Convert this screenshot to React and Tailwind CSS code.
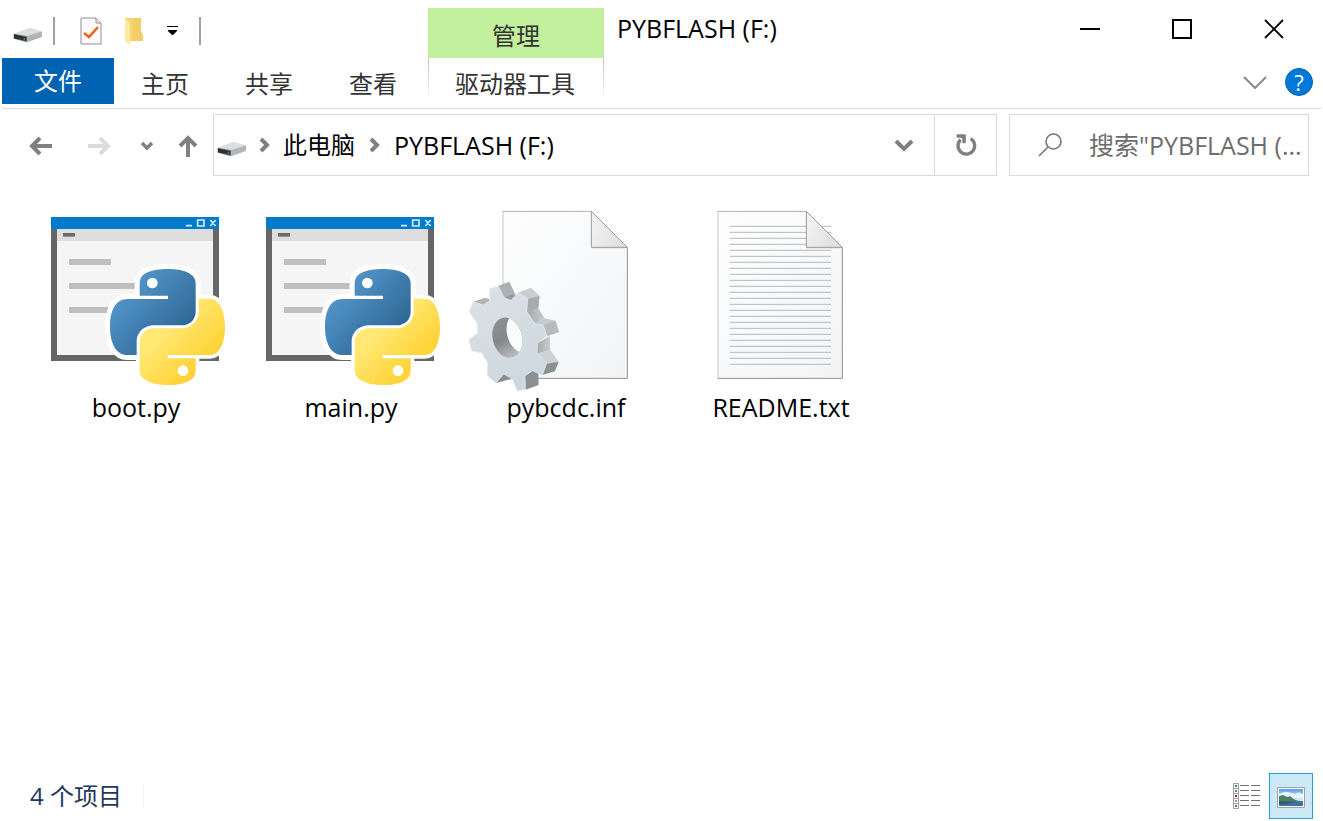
import { useState } from "react";

const tabs = ["主页", "共享", "查看"];

const files = [
  { name: "boot.py", Icon: PythonIcon },
  { name: "main.py", Icon: PythonIcon },
  { name: "pybcdc.inf", Icon: InfIcon },
  { name: "README.txt", Icon: TextIcon },
];

function DriveIcon() {
  return (
    <svg viewBox="0 0 90 48" className="mt-2 h-4 w-[30px] shrink-0">
      <path d="M2 20 50 2 87 13 42 27Z" fill="#dcdee1" />
      <path d="M42 27 87 13V30L42 46Z" fill="#b2b4b7" />
      <path d="M2 20 42 27V46L2 35Z" fill="#77797b" />
      <path d="M3 22 40 31V42L3 34Z" fill="#2d2f31" />
      <path d="M32 34h4v4h-4z" fill="#35c435" />
    </svg>
  );
}

function Crumb() {
  return (
    <svg viewBox="0 0 12 16" className="h-4 w-3 shrink-0" fill="none" stroke="#808080" strokeWidth="4">
      <path d="M2 2 8 8 2 14" />
    </svg>
  );
}

function PythonIcon() {
  const blue =
    "M413 207C366 207 329 218 329 250V287H414V297H292C258 297 240 330 240 380C240 432 260 465 292 465H320V424C320 395 345 376 372 376H455C480 376 497 358 497 335V250C497 220 460 207 413 207Z";
  const yellow =
    "M413 555C460 555 497 543 497 512V475H413V465H540C567 465 585 432 585 381C585 330 567 296 540 296H506V335C506 365 480 385 455 385H372C348 385 329 403 329 428V512C329 540 370 555 413 555Z";
  return (
    <svg viewBox="30 0 576 576" className="size-48">
      <defs>
        <linearGradient id="pyBlue" x1="0" y1="0" x2="0.8" y2="0.75">
          <stop offset="0.1" stopColor="#5a9fd4" />
          <stop offset="1" stopColor="#306998" />
        </linearGradient>
        <linearGradient id="pyYellow" x1="0.2" y1="0.3" x2="0.65" y2="0.75">
          <stop offset="0.2" stopColor="#ffe873" />
          <stop offset="1" stopColor="#ffd43b" />
        </linearGradient>
      </defs>
      <path d="M63 51H567V483H63Z" fill="#666" />
      <path d="M81 87H549V465H81Z" fill="#f5f5f5" />
      <path d="M81 87H549V123H81Z" fill="#dedede" />
      <path d="M63 51H567V87H63Z" fill="#007acc" />
      <path d="M99 99H135V110H99Z" fill="#6b6b6b" />
      <path d="M117 177H243V195H117ZM117 249H330V267H117ZM117 321H260V339H117Z" fill="#bfbfbf" />
      <path d="M468 77H486M503 60H522V78H503ZM541 60 557 78M557 60 541 78" fill="none" stroke="#d6ecfa" strokeWidth="5" />
      <path d={blue} fill="#fff" stroke="#fff" strokeWidth="30" strokeLinejoin="round" />
      <path d={yellow} fill="#fff" stroke="#fff" strokeWidth="22" strokeLinejoin="round" />
      <path d={blue} fill="url(#pyBlue)" />
      <path d={yellow} fill="url(#pyYellow)" />
      <circle cx="367" cy="249" r="16" fill="#fff" />
      <circle cx="459" cy="512" r="16" fill="#fff" />
    </svg>
  );
}

// blank page with a folded corner, x is the left edge
function Page({ x }) {
  return (
    <g transform={`translate(${x} 0)`}>
      <path d="M2 34H268L374 141V535H2Z" fill="url(#pageFill)" />
      <path d="M1 34V535" stroke="#d4d4d4" strokeWidth="4" />
      <path d="M0 34H268" stroke="#b0b0b0" strokeWidth="3" />
      <path d="M0 535H374V141" fill="none" stroke="#8c8c8c" strokeWidth="3" />
    </g>
  );
}

function Fold({ x }) {
  return (
    <g transform={`translate(${x} 0)`}>
      <path d="M266 34 374 141V146H266Z" fill="#e6e6e6" />
      <path d="M266 34 374 142H266Z" fill="url(#foldFill)" stroke="#9b9b9b" strokeWidth="3" />
    </g>
  );
}

function PageDefs() {
  return (
    <defs>
      <linearGradient id="pageFill" x1="0" y1="0" x2="1" y2="1">
        <stop offset="0" stopColor="#fefefe" />
        <stop offset="0.4" stopColor="#f9fafb" />
        <stop offset="1" stopColor="#f3f4f6" />
      </linearGradient>
      <linearGradient id="foldFill" x1="0" y1="0.6" x2="0.8" y2="1">
        <stop offset="0" stopColor="#f0f0f0" />
        <stop offset="1" stopColor="#dfdfdf" />
      </linearGradient>
    </defs>
  );
}

function InfIcon() {
  return (
    <svg viewBox="45 0 576 576" className="size-48 overflow-visible">
      <PageDefs />
      <defs>
        <linearGradient id="gearFace" x1="0" y1="0" x2="0.4" y2="1">
          <stop offset="0" stopColor="#dbe1e6" />
          <stop offset="1" stopColor="#cfd8e0" />
        </linearGradient>
        <linearGradient id="gearHole" x1="0" y1="0" x2="0.5" y2="1">
          <stop offset="0.2" stopColor="#8b8f91" />
          <stop offset="0.6" stopColor="#858889" />
          <stop offset="1" stopColor="#b9bdbf" />
        </linearGradient>
        <linearGradient id="gearSide" x1="0" y1="0" x2="1" y2="0">
          <stop offset="0" stopColor="#a4a9ac" />
          <stop offset="1" stopColor="#c9ced1" />
        </linearGradient>
        <clipPath id="gearClip">
          <ellipse cx="157" cy="413" rx="44" ry="61" transform="rotate(-14 157 413)" />
        </clipPath>
      </defs>
      <Page x={143} />
      <Fold x={143} />
      <path d="M55 305 90 293 104 297 103 310 85 316Z" fill="#aeb4b8" />
      <path d="M130 257 163 245 182 285 168 303 146 297Z" fill="#abb0b3" />
      <path d="M168 284 186 287 168 303 146 295Z" fill="#969b9e" />
      <path d="M189 278 228 263 254 287 217 298Z" fill="#c9ced2" />
      <path d="M217 297 254 287 250 326 216 337Z" fill="#a7acaf" />
      <path d="M216 335 250 325 269 355 240 372Z" fill="url(#gearSide)" />
      <path d="M238 371 269 355 302 362 265 377Z" fill="#c5cbcf" />
      <path d="M264 376 302 362 312 397 276 409Z" fill="#b5babd" />
      <path d="M247 430 284 408 286 451 246 461Z" fill="url(#gearSide)" />
      <path d="M246 460 286 450 311 485 275 493Z" fill="#ccd2d6" />
      <path d="M275 491 311 485 300 514 262 525Z" fill="#8b9092" />
      <path d="M210 528 232 512 250 516 251 555 211 569Z" fill="#8b9092" />
      <path d="M123 549 146 522 173 536Z" fill="#888d90" />
      <path
        d="M103 267 130 258 148 293 168 301 190 278 218 296 215 335 240 372 264 375 276 407 248 429 246 460 275 489 262 525 232 512 210 527 211 568 187 573 172 537 146 522 123 549 97 527 98 488 80 458 50 453 42 418 68 400 67 370 42 335 55 305 84 315 105 302Z"
        fill="url(#gearFace)"
        stroke="#e3e8ec"
        strokeWidth="2"
        strokeLinejoin="round"
      />
      <g clipPath="url(#gearClip)">
        <path d="M100 340H220V480H100Z" fill="url(#gearHole)" />
        <ellipse cx="197" cy="398" rx="41" ry="61" transform="rotate(-14 197 398)" fill="#fafbfb" />
      </g>
    </svg>
  );
}

function TextIcon() {
  return (
    <svg viewBox="-30 0 576 576" className="size-48">
      <PageDefs />
      <Page x={68} />
      {Array.from({ length: 24 }, (_, i) => (
        <path key={i} d={`M104 ${79 + i * 18}H408`} stroke="#b9b9b9" strokeWidth="3" />
      ))}
      <Fold x={68} />
    </svg>
  );
}

function TitleBar() {
  return (
    <header className="flex h-[58px]">
      <div className="flex w-[426px] items-center gap-[10px] pl-[11px] pt-1">
        <DriveIcon />
        <span className="h-7 w-[2px] bg-[#a0a0a0]" />
        <button type="button" aria-label="属性" className="ml-[15px]">
          <svg viewBox="0 0 22 28" className="h-7 w-[22px]">
            <path d="M1 1H16L21 6V27H1Z" fill="#fafafa" stroke="#8f8f8f" />
            <path d="M16 1V6H21" fill="#e8e8e8" stroke="#8f8f8f" />
            <path d="M4 16 9 20 18 10" fill="none" stroke="#f2601a" strokeWidth="2.5" />
          </svg>
        </button>
        <button type="button" aria-label="新建文件夹" className="ml-3">
          <svg viewBox="0 0 20 28" className="h-7 w-5">
            <path d="M1 1H17V15L19 18V24H1Z" fill="#f6d36b" />
            <path d="M9 1H17V15L19 18V24H9Z" fill="#f3ce68" />
            <path d="M1 1 6 6V28L1 24Z" fill="#ffe9a2" />
          </svg>
        </button>
        <button type="button" aria-label="自定义快速访问工具栏" className="ml-3">
          <svg viewBox="0 0 12 12" className="size-3">
            <path d="M1 1H12V2H1ZM2 5H11V6L7 10H6L2 6Z" fill="#000" />
          </svg>
        </button>
        <span className="ml-[11px] h-7 w-[2px] bg-[#a0a0a0]" />
      </div>
      <button type="button" className="mt-2 w-44 bg-[#c2f09c] pt-[5px] text-[#333]">管理</button>
      <h1 className="flex-1 pl-[13px] pt-3 text-[25px]/8">PYBFLASH (F:)</h1>
      <div className="flex pr-px">
        <button type="button" aria-label="最小化" className="flex w-[92px] items-center justify-center">
          <svg viewBox="0 0 20 20" className="size-5" stroke="#000" strokeWidth="2">
            <path d="M0 10H20" />
          </svg>
        </button>
        <button type="button" aria-label="最大化" className="flex w-[92px] items-center justify-center">
          <svg viewBox="0 0 20 20" className="size-5" fill="none" stroke="#000" strokeWidth="2">
            <path d="M1 1H19V19H1Z" />
          </svg>
        </button>
        <button type="button" aria-label="关闭" className="flex w-[92px] items-center justify-center">
          <svg viewBox="0 0 20 20" className="size-5" stroke="#000" strokeWidth="1.8">
            <path d="M1 1 19 19M19 1 1 19" />
          </svg>
        </button>
      </div>
    </header>
  );
}

function Ribbon() {
  return (
    <nav className="flex h-[51px] border-b border-[#dadbdc] text-[#333]">
      <button type="button" className="h-[46px] w-28 bg-[#0063b1] text-white">文件</button>
      {tabs.map((tab) => (
        <button key={tab} type="button" className="h-[50px] w-[104px] pr-[2px] pt-px">{tab}</button>
      ))}
      <div className="flex h-[50px] w-[178px] pl-[2px]">
        <span className="h-[38px] w-px bg-linear-to-b from-[#c0c0c0] to-[#f4f4f4]" />
        <button type="button" className="flex-1 pr-[2px] pt-px">驱动器工具</button>
        <span className="h-[38px] w-px bg-linear-to-b from-[#c0c0c0] to-[#f4f4f4]" />
      </div>
      <div className="ml-auto flex h-12 items-center gap-[18px] pr-2">
        <button type="button" aria-label="展开功能区">
          <svg viewBox="0 0 24 14" className="h-[14px] w-6" fill="none" stroke="#8a8a8a" strokeWidth="2">
            <path d="M1 2 12 13 23 2" />
          </svg>
        </button>
        <button type="button" aria-label="帮助" className="size-7 rounded-full border border-[#0063b1] bg-[#0078d7] text-[22px]/6 font-medium text-white">?</button>
      </div>
    </nav>
  );
}

function AddressBar() {
  const [query, setQuery] = useState("");

  return (
    <div className="flex h-[67px] items-start pr-3 pt-[5px]">
      <div className="flex h-16 w-[211px] items-center pl-[27px]">
        <button type="button" aria-label="后退" className="w-[58px]">
          <svg viewBox="0 0 24 20" className="h-5 w-6" fill="none" stroke="#808080" strokeWidth="4">
            <path d="M23 10H4M11 2 3 10 11 18" />
          </svg>
        </button>
        <button type="button" aria-label="前进" className="w-[52px]">
          <svg viewBox="0 0 24 20" className="h-5 w-6" fill="none" stroke="#dcdcdc" strokeWidth="4">
            <path d="M1 10H20M13 2 21 10 13 18" />
          </svg>
        </button>
        <button type="button" aria-label="最近位置" className="w-[39px]">
          <svg viewBox="0 0 16 10" className="h-[10px] w-4" fill="none" stroke="#808080" strokeWidth="3.5">
            <path d="M3 2 8 7 13 2" />
          </svg>
        </button>
        <button type="button" aria-label="上移">
          <svg viewBox="0 0 20 24" className="h-6 w-5" fill="none" stroke="#808080" strokeWidth="4">
            <path d="M10 23V4M2 12 10 4 18 12" />
          </svg>
        </button>
      </div>
      <div className="flex h-[62px] min-w-0 flex-1 items-center border border-[#d9d9d9] pl-[3px]">
        <DriveIcon />
        <span className="mx-3"><Crumb /></span>
        <button type="button">此电脑</button>
        <span className="ml-[14px] mr-[13px]"><Crumb /></span>
        <button type="button" className="text-[25px]/8">PYBFLASH (F:)</button>
        <button type="button" aria-label="历史记录" className="ml-auto px-5">
          <svg viewBox="0 0 20 14" className="h-[14px] w-5" fill="none" stroke="#808080" strokeWidth="4">
            <path d="M2 3 10 11 18 3" />
          </svg>
        </button>
        <button type="button" aria-label="刷新" className="flex h-full w-[62px] items-center justify-center border-l border-[#d9d9d9]">
          <svg viewBox="0 0 66 72" className="h-6 w-[22px]" fill="none" stroke="#808080" strokeWidth="10">
            <path d="M17 20A25 25 0 1 0 47 17" />
            <path d="M5 9H27V31" />
            <path d="M10 6H32V28Z" fill="#808080" stroke="none" />
          </svg>
        </button>
      </div>
      <label className="ml-3 flex h-[62px] w-[300px] items-center border border-[#d9d9d9] pl-7">
        <svg viewBox="0 0 24 24" className="size-6 shrink-0" fill="none" stroke="#757575" strokeWidth="1.6">
          <circle cx="15.500" cy="8.500" r="7.500" />
          <path d="M10 14 1 23" />
        </svg>
        <input
          type="text"
          aria-label="搜索"
          value={query}
          onChange={(e) => setQuery(e.target.value)}
          placeholder={'搜索"PYBFLASH (...'}
          className="ml-[27px] min-w-0 flex-1 text-[25px]/8 outline-none placeholder:text-[#6d6d6d]"
        />
      </label>
    </div>
  );
}

function StatusBar() {
  return (
    <footer className="flex h-12 items-center pb-[2px] pl-7 pr-2 text-[#1e395b]">
      <span>4 个项目</span>
      <span className="ml-[21px] h-6 w-px bg-[#efefef]" />
      <div className="ml-auto flex items-center">
        <button type="button" aria-label="详细信息" className="px-2">
          <svg viewBox="0 0 28 28" className="size-7">
            <path d="M0.500 1.500H5.500V26.500H0.500ZM0 6.500H6M0 11.500H6M0 16.500H6M0 21.500H6" fill="none" stroke="#a0a0a0" />
            <path d="M2 3h2v2H2zM2 23h2v2H2z" fill="#3a7d9a" />
            <path d="M2 8h2v2H2z" fill="#7d8a3a" />
            <path d="M2 13h2v2H2z" fill="#a02020" />
            <path d="M2 18h2v2H2z" fill="#7a9ad0" />
            <path d="M7 3.500H16M18 3.500H27M7 8.500H16M18 8.500H27M7 13.500H16M18 13.500H27M7 18.500H16M18 18.500H27M7 23.500H16M18 23.500H27" stroke="#707070" />
          </svg>
        </button>
        <button type="button" aria-label="大图标" className="flex h-[46px] w-11 items-center justify-center border border-[#26a0da] bg-[#cbe8f6] pr-px">
          <svg viewBox="0 0 84 63" className="mt-[2px] h-[21px] w-7">
            <defs>
              <linearGradient id="sky" x1="0" y1="0" x2="0" y2="1">
                <stop offset="0" stopColor="#5b9bf0" />
                <stop offset="0.6" stopColor="#cfe6fb" />
              </linearGradient>
            </defs>
            <path d="M1.500 1.500H82.500V61.500H1.500Z" fill="#fff" stroke="#a0a0a0" strokeWidth="3" />
            <path d="M6 6H78V57H6Z" fill="url(#sky)" />
            <path d="M6 20 24 14 42 17 54 20 66 16 78 22V34H6Z" fill="#e8f3fc" />
            <path d="M6 27 18 24 30 30 40 28 50 36 62 41 78 43V46H6Z" fill="#4b8062" />
            <path d="M6 44H78V57H6Z" fill="#3d6fa8" />
            <path d="M6 42 40 44 54 45 30 50 6 51Z" fill="#2e5a63" />
          </svg>
        </button>
      </div>
    </footer>
  );
}

export default function App() {
  return (
    <div className="flex min-h-screen flex-col bg-white px-[2px] font-['Open_Sans','Noto_Sans_CJK_SC',sans-serif] text-[24px]/8 text-black">
      <TitleBar />
      <Ribbon />
      <AddressBar />
      <main className="flex-1 pl-[38px] pt-6">
        <ul className="flex flex-wrap gap-x-[23px] gap-y-6">
          {files.map(({ name, Icon }) => (
            <li key={name} className="flex w-48 flex-col items-center">
              <Icon />
              <span className="text-[25px]/[30px]">{name}</span>
            </li>
          ))}
        </ul>
      </main>
      <StatusBar />
    </div>
  );
}
